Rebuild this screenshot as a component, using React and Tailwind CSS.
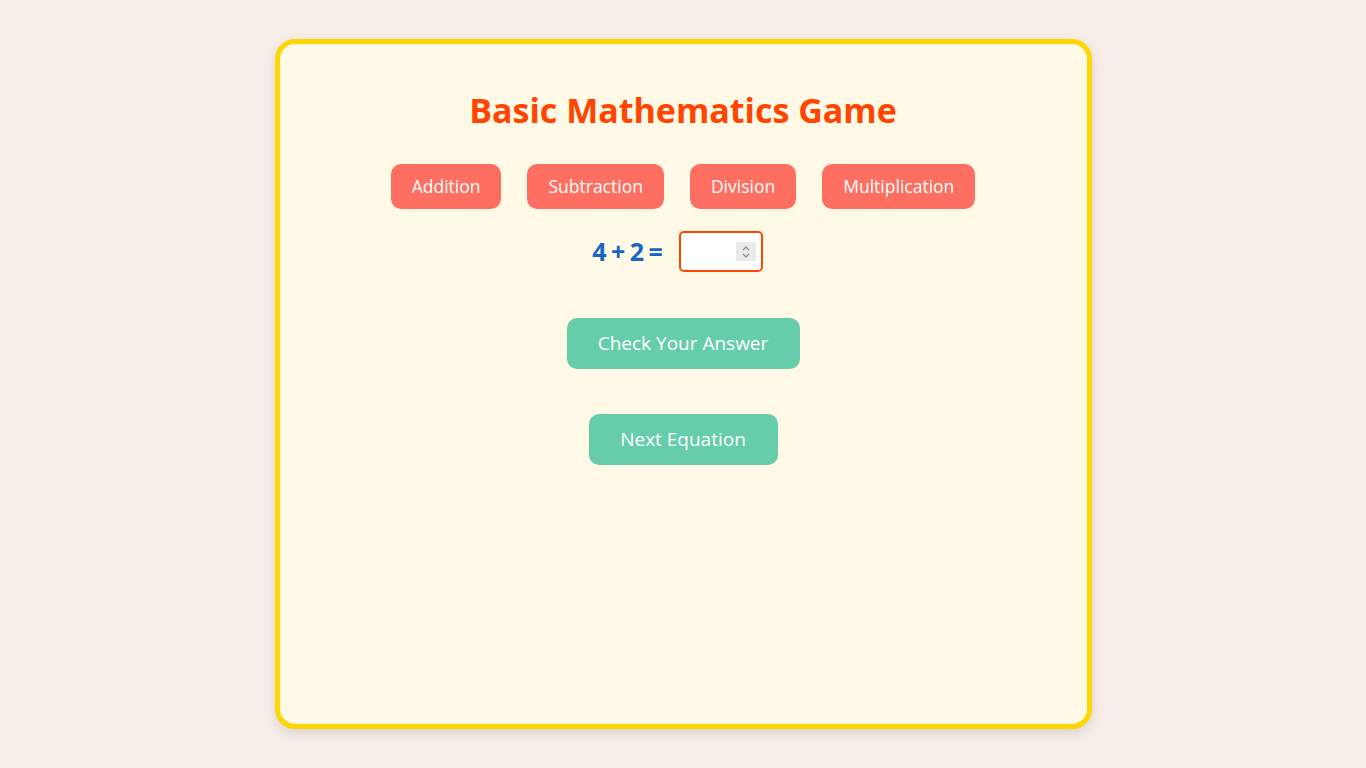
import React from "react";

export default function App() {
  const ops = ["Addition", "Subtraction", "Division", "Multiplication"];
  return (
    <div className="w-[1366px] h-[768px] bg-[#F7EEE8] flex items-center justify-center" style={{ fontFamily: '"Open Sans", sans-serif' }}>
      <div className="w-[817px] h-[690px] bg-[#FFF9E6] border-[5px] border-[#FFD700] rounded-[20px] shadow-[0_4px_12px_rgba(0,0,0,0.12)] flex flex-col items-center">
        <h1 className="mt-[44px] text-[34px] leading-[44px] font-bold text-[#FF4500]">Basic Mathematics Game</h1>
        <div className="mt-[32px] flex gap-[26px]">
          {ops.map((o) => (
            <button key={o} className="h-[45px] px-[21px] rounded-[10px] bg-[#FF6F61] text-white text-[17.5px]">{o}</button>
          ))}
        </div>
        <div className="mt-[22px] mr-[11px] flex items-center gap-[17px]">
          <span className="text-[25px] font-bold text-[#1565C8] tracking-[-1px]">4 + 2 =</span>
          <div className="relative w-[84px] h-[41px]">
            <input type="number" className="w-full h-full bg-white border-2 border-[#FF4500] rounded-[5px] px-2 text-[18px] appearance-none [&::-webkit-inner-spin-button]:appearance-none" />
            <div className="absolute left-[57px] top-[11px] w-[20px] h-[19px] bg-[#EAEAEA] flex flex-col items-center justify-center">
              <svg width="10" height="16" viewBox="0 0 10 16" fill="none" stroke="#8a8a8a" strokeWidth="1.2">
                <path d="M2 6 L5 3 L8 6" />
                <path d="M2 10 L5 13 L8 10" />
              </svg>
            </div>
          </div>
        </div>
        <button className="mt-[46px] w-[233px] h-[51px] rounded-[10px] bg-[#66CDAA] text-white text-[19px]">Check Your Answer</button>
        <button className="mt-[45px] w-[189px] h-[51px] rounded-[10px] bg-[#66CDAA] text-white text-[19px]">Next Equation</button>
      </div>
    </div>
  );
}
